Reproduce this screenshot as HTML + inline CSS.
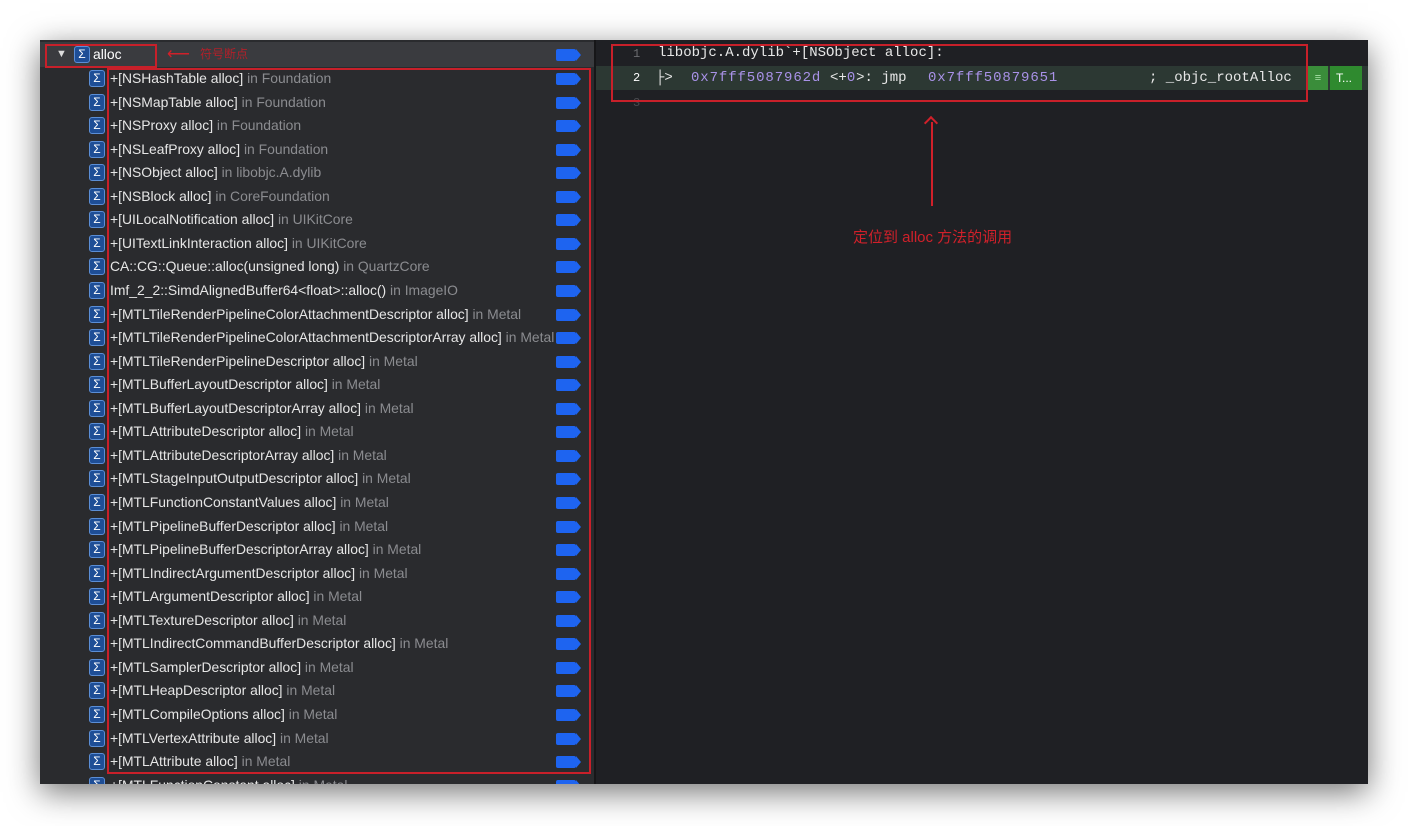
<!DOCTYPE html>
<html><head><meta charset="utf-8"><style>
body{margin:0;width:1408px;height:826px;background:#fff;overflow:hidden;font-family:"Liberation Sans","Noto Sans CJK SC",sans-serif;position:relative}
.win{position:absolute;left:40px;top:40px;width:1328px;height:744px;background:#1f2024;box-shadow:0 8px 30px rgba(0,0,0,.55);overflow:hidden}
.left{position:absolute;left:0;top:0;width:554px;height:744px;background:#2a2b2e;border-right:2px solid #161618}
.hdr{position:absolute;left:0;top:2px;width:554px;height:25px;background:#3a3b3f}
.r{position:absolute;left:0;width:554px;height:23px;font-size:13.9px;color:#e6e6e6;line-height:23px;white-space:nowrap}
.s{position:absolute;left:49px;top:3px;width:14px;height:15px;border:1px solid #5b8ed6;background:#1e4e96;border-radius:3px;color:#fff;font-size:12px;line-height:15px;text-align:center}
.t{position:absolute;left:70px;top:0}
.g{color:#8b8c90}
.tag{position:absolute;left:516px;top:6px;width:20px;height:12px;background:#1e64f0;border-radius:2px}
.tag:after{content:"";position:absolute;right:-5px;top:0;border-left:5px solid #1e64f0;border-top:6px solid transparent;border-bottom:6px solid transparent}
.red{position:absolute;border:2px solid #c8202a}
.code{position:absolute;font-family:"Liberation Mono",monospace;font-size:14px;color:#e8e8e8;white-space:pre}
.ln{position:absolute;font-family:"Liberation Mono",monospace;font-size:12px;color:#6b6c70}
.p{color:#a992e8;letter-spacing:0.9px}
</style></head><body>
<div class="win">
<div class="left">
<div class="hdr"></div>
<div class="r" style="top:3px"><span style="position:absolute;left:16px;font-size:11px;color:#ddd">▼</span><span class="s" style="left:34px">Σ</span><span class="t" style="left:53px;color:#fff">alloc</span><span style="position:absolute;left:127px;color:#d0202a;font-size:16px">⟵</span><span style="position:absolute;left:160px;color:#b0202a;font-size:12px">符号断点</span><span class="tag"></span></div>
<div class="r" style="top:27px"><span class="s">Σ</span><span class="t">+[NSHashTable alloc] <span class="g">in Foundation</span></span><span class="tag"></span></div>
<div class="r" style="top:50.5px"><span class="s">Σ</span><span class="t">+[NSMapTable alloc] <span class="g">in Foundation</span></span><span class="tag"></span></div>
<div class="r" style="top:74px"><span class="s">Σ</span><span class="t">+[NSProxy alloc] <span class="g">in Foundation</span></span><span class="tag"></span></div>
<div class="r" style="top:97.6px"><span class="s">Σ</span><span class="t">+[NSLeafProxy alloc] <span class="g">in Foundation</span></span><span class="tag"></span></div>
<div class="r" style="top:121.2px"><span class="s">Σ</span><span class="t">+[NSObject alloc] <span class="g">in libobjc.A.dylib</span></span><span class="tag"></span></div>
<div class="r" style="top:144.7px"><span class="s">Σ</span><span class="t">+[NSBlock alloc] <span class="g">in CoreFoundation</span></span><span class="tag"></span></div>
<div class="r" style="top:168.3px"><span class="s">Σ</span><span class="t">+[UILocalNotification alloc] <span class="g">in UIKitCore</span></span><span class="tag"></span></div>
<div class="r" style="top:191.8px"><span class="s">Σ</span><span class="t">+[UITextLinkInteraction alloc] <span class="g">in UIKitCore</span></span><span class="tag"></span></div>
<div class="r" style="top:215.4px"><span class="s">Σ</span><span class="t">CA::CG::Queue::alloc(unsigned long) <span class="g">in QuartzCore</span></span><span class="tag"></span></div>
<div class="r" style="top:239px"><span class="s">Σ</span><span class="t">Imf_2_2::SimdAlignedBuffer64&lt;float&gt;::alloc() <span class="g">in ImageIO</span></span><span class="tag"></span></div>
<div class="r" style="top:262.5px"><span class="s">Σ</span><span class="t">+[MTLTileRenderPipelineColorAttachmentDescriptor alloc] <span class="g">in Metal</span></span><span class="tag"></span></div>
<div class="r" style="top:286px"><span class="s">Σ</span><span class="t">+[MTLTileRenderPipelineColorAttachmentDescriptorArray alloc] <span class="g">in Metal</span></span><span class="tag"></span></div>
<div class="r" style="top:309.6px"><span class="s">Σ</span><span class="t">+[MTLTileRenderPipelineDescriptor alloc] <span class="g">in Metal</span></span><span class="tag"></span></div>
<div class="r" style="top:333.2px"><span class="s">Σ</span><span class="t">+[MTLBufferLayoutDescriptor alloc] <span class="g">in Metal</span></span><span class="tag"></span></div>
<div class="r" style="top:356.7px"><span class="s">Σ</span><span class="t">+[MTLBufferLayoutDescriptorArray alloc] <span class="g">in Metal</span></span><span class="tag"></span></div>
<div class="r" style="top:380.3px"><span class="s">Σ</span><span class="t">+[MTLAttributeDescriptor alloc] <span class="g">in Metal</span></span><span class="tag"></span></div>
<div class="r" style="top:403.8px"><span class="s">Σ</span><span class="t">+[MTLAttributeDescriptorArray alloc] <span class="g">in Metal</span></span><span class="tag"></span></div>
<div class="r" style="top:427.4px"><span class="s">Σ</span><span class="t">+[MTLStageInputOutputDescriptor alloc] <span class="g">in Metal</span></span><span class="tag"></span></div>
<div class="r" style="top:451px"><span class="s">Σ</span><span class="t">+[MTLFunctionConstantValues alloc] <span class="g">in Metal</span></span><span class="tag"></span></div>
<div class="r" style="top:474.5px"><span class="s">Σ</span><span class="t">+[MTLPipelineBufferDescriptor alloc] <span class="g">in Metal</span></span><span class="tag"></span></div>
<div class="r" style="top:498px"><span class="s">Σ</span><span class="t">+[MTLPipelineBufferDescriptorArray alloc] <span class="g">in Metal</span></span><span class="tag"></span></div>
<div class="r" style="top:521.6px"><span class="s">Σ</span><span class="t">+[MTLIndirectArgumentDescriptor alloc] <span class="g">in Metal</span></span><span class="tag"></span></div>
<div class="r" style="top:545.2px"><span class="s">Σ</span><span class="t">+[MTLArgumentDescriptor alloc] <span class="g">in Metal</span></span><span class="tag"></span></div>
<div class="r" style="top:568.7px"><span class="s">Σ</span><span class="t">+[MTLTextureDescriptor alloc] <span class="g">in Metal</span></span><span class="tag"></span></div>
<div class="r" style="top:592.3px"><span class="s">Σ</span><span class="t">+[MTLIndirectCommandBufferDescriptor alloc] <span class="g">in Metal</span></span><span class="tag"></span></div>
<div class="r" style="top:615.8px"><span class="s">Σ</span><span class="t">+[MTLSamplerDescriptor alloc] <span class="g">in Metal</span></span><span class="tag"></span></div>
<div class="r" style="top:639.4px"><span class="s">Σ</span><span class="t">+[MTLHeapDescriptor alloc] <span class="g">in Metal</span></span><span class="tag"></span></div>
<div class="r" style="top:663px"><span class="s">Σ</span><span class="t">+[MTLCompileOptions alloc] <span class="g">in Metal</span></span><span class="tag"></span></div>
<div class="r" style="top:686.5px"><span class="s">Σ</span><span class="t">+[MTLVertexAttribute alloc] <span class="g">in Metal</span></span><span class="tag"></span></div>
<div class="r" style="top:710px"><span class="s">Σ</span><span class="t">+[MTLAttribute alloc] <span class="g">in Metal</span></span><span class="tag"></span></div>
<div class="r" style="top:733.6px"><span class="s">Σ</span><span class="t">+[MTLFunctionConstant alloc] <span class="g">in Metal</span></span><span class="tag"></span></div>
<div class="red" style="left:5px;top:4px;width:108px;height:20px"></div>
<div class="red" style="left:67px;top:28px;width:480px;height:702px"></div>
</div>
<div style="position:absolute;left:556px;top:26px;width:772px;height:24px;background:#2c3833"></div>
<div style="position:absolute;left:1268px;top:26px;width:20px;height:24px;background:#3a8d3a;color:#a6e0a6;font-size:11px;text-align:center;line-height:24px">≡</div>
<div style="position:absolute;left:1290px;top:26px;width:32px;height:24px;background:#2f8a2f;color:#fff;font-size:12px;line-height:24px;padding-left:6px;box-sizing:border-box">T...</div>
<div class="ln" style="left:593px;top:7px">1</div>
<div class="ln" style="left:593px;top:31px;color:#fff">2</div>
<div class="ln" style="left:593px;top:56px;color:#4a4b50">3</div>
<div class="code" style="left:618px;top:5px">libobjc.A.dylib`+[NSObject alloc]:</div>
<div class="code" style="left:616px;top:30px">├&gt;</div>
<div class="code" style="left:651px;top:30px"><span class="p">0x7fff5087962d</span></div>
<div class="code" style="left:790px;top:30px">&lt;+<span class="p">0</span>&gt;: jmp</div>
<div class="code" style="left:888px;top:30px"><span class="p">0x7fff50879651</span></div>
<div class="code" style="left:1109px;top:30px">; _objc_rootAlloc</div>
<div class="red" style="left:571px;top:4px;width:693px;height:54px"></div>
<div style="position:absolute;left:891px;top:82px;width:2px;height:84px;background:#d0202a"></div>
<div style="position:absolute;top:78px;width:8px;height:8px;border-left:2px solid #d0202a;border-top:2px solid #d0202a;transform:rotate(45deg);left:886px"></div>
<div style="position:absolute;left:813px;top:186px;color:#d0202a;font-size:15px">定位到 alloc 方法的调用</div>
</div>
</body></html>
